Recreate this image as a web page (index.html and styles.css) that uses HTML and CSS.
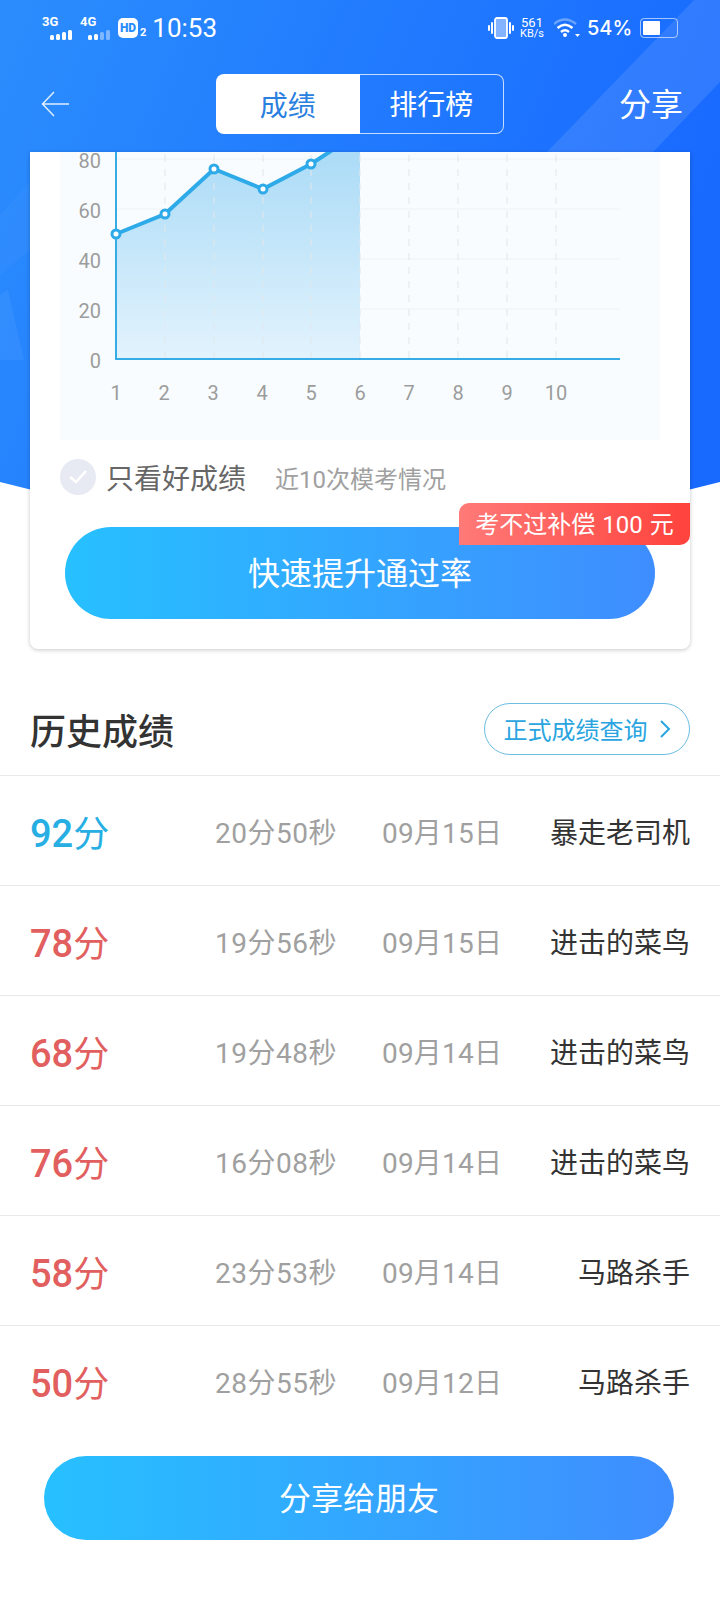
FILE: index.html
```html
<!DOCTYPE html>
<html>
    <head>
        <meta charset="UTF-8">
        <meta name="viewport" content="width=device-width, initial-scale=1.0">
        <title>成绩</title>
        <link rel="stylesheet" href="styles.css">
    </head>
    <body>
        <div class="page">
            <!-- blue backdrop with the curved lower edge -->
            <svg class="backdrop" width="720" height="540" viewBox="0 0 720 540">
                <defs>
                    <linearGradient id="backdropFill" x1="0" y1="0" x2="1" y2="0.3">
                        <stop offset="0" stop-color="#2b8dfd"/>
                        <stop offset="1" stop-color="#186aff"/>
                    </linearGradient>
                </defs>
                <path d="M0 0H720V482Q360 576 0 482Z" fill="url(#backdropFill)"/>
                <path d="M694 0H720V82L653 152H547Z" fill="#ffffff" opacity="0.1"/>
                <path d="M0 215L30 182V250L0 275Z" fill="#ffffff" opacity="0.03"/>
                <path d="M0 295L8 290L24 360H0Z" fill="#ffffff" opacity="0.05"/>
            </svg>

            <div class="status-bar">
                <div class="status-left">
                    <div class="signal">
                        <span class="signal-name">3G</span>
                        <svg width="24" height="10" viewBox="0 0 24 10">
                            <rect x="0" y="5" width="4" height="5" rx="1.5" fill="#fff"/>
                            <rect x="6" y="4" width="4" height="6" rx="1.5" fill="#fff"/>
                            <rect x="12" y="2" width="4" height="8" rx="1.5" fill="#fff"/>
                            <rect x="18" y="0" width="4" height="10" rx="1.5" fill="#fff"/>
                        </svg>
                    </div>
                    <div class="signal">
                        <span class="signal-name">4G</span>
                        <svg width="24" height="10" viewBox="0 0 24 10">
                            <rect x="0" y="5" width="4" height="5" rx="1.5" fill="#fff"/>
                            <rect x="6" y="4" width="4" height="6" rx="1.5" fill="#fff"/>
                            <rect x="12" y="2" width="4" height="8" rx="1.5" fill="#fff" opacity="0.4"/>
                            <rect x="18" y="0" width="4" height="10" rx="1.5" fill="#fff" opacity="0.4"/>
                        </svg>
                    </div>
                    <span class="hd">HD</span>
                    <span class="hd-sub">2</span>
                    <span class="clock">10:53</span>
                </div>
                <div class="status-right">
                    <svg width="26" height="24" viewBox="0 0 26 24">
                        <rect x="7" y="2" width="12" height="20" rx="2" fill="#ffffff" fill-opacity="0.45" stroke="#fff" stroke-width="1.8"/>
                        <path d="M4 7V17M1 10V14M22 7V17M25 10V14" stroke="#fff" stroke-width="2" stroke-linecap="round"/>
                    </svg>
                    <div class="speed">
                        <span class="speed-num">561</span>
                        <span class="speed-unit">KB/s</span>
                    </div>
                    <svg class="wifi" width="26" height="20" viewBox="0 0 26 20">
                        <path d="M0 6Q11 -3 22 6" fill="none" stroke="#fff" stroke-width="2.4" opacity="0.35"/>
                        <path d="M3.5 10Q11 3.5 18.500 10" fill="none" stroke="#fff" stroke-width="2.4"/>
                        <path d="M7 14Q11 10.500 15 14" fill="none" stroke="#fff" stroke-width="2.4"/>
                        <circle cx="11" cy="17" r="2" fill="#fff"/>
                        <path d="M21 16H26L23.500 19Z" fill="#fff"/>
                    </svg>
                    <span class="battery-num">54%</span>
                    <div class="battery">
                        <div class="battery-level"></div>
                    </div>
                </div>
            </div>

            <div class="header">
                <svg class="back" width="28" height="26" viewBox="0 0 28 26">
                    <path d="M28 13H2M13 1L1.500 13L13 25" fill="none" stroke="#fff" stroke-opacity="0.85" stroke-width="1.5"/>
                </svg>
                <div class="tabs">
                    <div class="tab tab-active">成绩</div>
                    <div class="tab">排行榜</div>
                </div>
                <div class="share">分享</div>
            </div>

            <div class="card">
                <svg class="chart" width="600" height="288" viewBox="60 152 600 288">
                    <defs>
                        <linearGradient id="areaFill" x1="0" y1="0" x2="0" y2="1">
                            <stop offset="0" stop-color="#a6d9f6"/>
                            <stop offset="1" stop-color="#e2f3fd"/>
                        </linearGradient>
                    </defs>
                    <rect x="60" y="152" width="600" height="288" fill="#f8fcff"/>
                    <path d="M116 159H620M116 209H620M116 259H620M116 309H620" stroke="#eef2f5" stroke-width="1"/>
                    <path d="M116 234L165 214L214 169L263 189L311 164L360 132V359H116Z" fill="url(#areaFill)"/>
                    <path d="M165 155V359M214 155V359M263 155V359M311 155V359M360 155V359M409 155V359M458 155V359M507 155V359M556 155V359" stroke="#e2e8ec" stroke-width="1.5" stroke-dasharray="7 7" opacity="0.7"/>
                    <path d="M116 152V359H620" fill="none" stroke="#35ace6" stroke-width="2"/>
                    <path d="M116 234L165 214L214 169L263 189L311 164L360 132" fill="none" stroke="#2eaae9" stroke-width="4"/>
                    <g fill="#fff" stroke="#2eaae9" stroke-width="3">
                        <circle cx="116" cy="234" r="4"/>
                        <circle cx="165" cy="214" r="4"/>
                        <circle cx="214" cy="169" r="4"/>
                        <circle cx="263" cy="189" r="4"/>
                        <circle cx="311" cy="164" r="4"/>
                    </g>
                    <g class="chart-y" text-anchor="end">
                        <text x="101" y="168">80</text>
                        <text x="101" y="218">60</text>
                        <text x="101" y="268">40</text>
                        <text x="101" y="318">20</text>
                        <text x="101" y="368">0</text>
                    </g>
                    <g class="chart-x" text-anchor="middle">
                        <text x="116" y="400">1</text>
                        <text x="164" y="400">2</text>
                        <text x="213" y="400">3</text>
                        <text x="262" y="400">4</text>
                        <text x="311" y="400">5</text>
                        <text x="360" y="400">6</text>
                        <text x="409" y="400">7</text>
                        <text x="458" y="400">8</text>
                        <text x="507" y="400">9</text>
                        <text x="556" y="400">10</text>
                    </g>
                </svg>

                <div class="filter">
                    <div class="check">
                        <svg width="20" height="16" viewBox="0 0 20 16">
                            <path d="M2 8L8 13L18 2" fill="none" stroke="#fff" stroke-width="2.6"/>
                        </svg>
                    </div>
                    <span class="filter-label">只看好成绩</span>
                    <span class="filter-note">近10次模考情况</span>
                </div>

                <div class="btn">快速提升通过率</div>
                <div class="badge">考不过补偿 100 元</div>
            </div>

            <div class="history-head">
                <div class="history-title">历史成绩</div>
                <div class="query">
                    正式成绩查询
                    <svg width="12" height="20" viewBox="0 0 12 20">
                        <path d="M2 2L10 10L2 18" fill="none" stroke="#2aa5e0" stroke-width="2"/>
                    </svg>
                </div>
            </div>

            <div class="rows">
                <div class="row">
                    <div class="score score-good"><b>92</b>分</div>
                    <div class="muted">20分50秒</div>
                    <div class="muted date">09月15日</div>
                    <div class="name">暴走老司机</div>
                </div>
                <div class="row">
                    <div class="score"><b>78</b>分</div>
                    <div class="muted">19分56秒</div>
                    <div class="muted date">09月15日</div>
                    <div class="name">进击的菜鸟</div>
                </div>
                <div class="row">
                    <div class="score"><b>68</b>分</div>
                    <div class="muted">19分48秒</div>
                    <div class="muted date">09月14日</div>
                    <div class="name">进击的菜鸟</div>
                </div>
                <div class="row">
                    <div class="score"><b>76</b>分</div>
                    <div class="muted">16分08秒</div>
                    <div class="muted date">09月14日</div>
                    <div class="name">进击的菜鸟</div>
                </div>
                <div class="row">
                    <div class="score"><b>58</b>分</div>
                    <div class="muted">23分53秒</div>
                    <div class="muted date">09月14日</div>
                    <div class="name">马路杀手</div>
                </div>
                <div class="row">
                    <div class="score"><b>50</b>分</div>
                    <div class="muted">28分55秒</div>
                    <div class="muted date">09月12日</div>
                    <div class="name">马路杀手</div>
                </div>
            </div>

            <div class="btn btn-share">分享给朋友</div>
        </div>
    </body>
</html>
```

FILE: styles.css
```css
*{
    box-sizing: border-box;
    font-family: Roboto, "Noto Sans CJK SC", sans-serif;
}

body{
    margin: 0;
    background-color: white;
}

.page{
    position: relative;
    width: 720px;
    height: 1600px;
    overflow: hidden;
}

.backdrop{
    position: absolute;
    top: 0;
    left: 0;
}

.status-bar{
    position: relative;
    height: 56px;
    padding: 0 42px;
    display: flex;
    justify-content: space-between;
    align-items: center;
    color: white;
}

.status-left, .status-right{
    display: flex;
    align-items: center;
}

.signal{
    position: relative;
    width: 38px;
    height: 24px;
    padding: 14px 0 0 8px;
}

.signal svg{
    display: block;
}

.signal-name{
    position: absolute;
    top: -1px;
    left: 0;
    font-size: 13px;
    font-weight: 700;
    line-height: 14px;
}

.hd{
    width: 20px;
    height: 20px;
    border-radius: 5px;
    background-color: white;
    color: #2b8dfd;
    font-size: 12px;
    font-weight: 900;
    line-height: 20px;
    text-align: center;
}

.hd-sub{
    margin: 8px 6px 0 2px;
    font-size: 11px;
    font-weight: 700;
}

.clock{
    font-size: 26px;
}

.speed{
    width: 24px;
    margin-left: 6px;
    display: flex;
    flex-direction: column;
    align-items: center;
    line-height: 11px;
}

.speed-num{
    font-size: 13px;
}

.speed-unit{
    font-size: 11px;
    white-space: nowrap;
}

.wifi{
    margin-left: 10px;
}

.battery-num{
    width: 44px;
    margin-left: 7px;
    font-family: Inter, sans-serif;
    font-size: 20px;
    font-weight: 500;
    white-space: nowrap;
}

.battery{
    width: 38px;
    height: 20px;
    margin-left: 9px;
    padding: 2px;
    border: 1.5px solid rgba(255, 255, 255, 0.6);
    border-radius: 4px;
}

.battery-level{
    width: 54%;
    height: 100%;
    background-color: white;
    border-radius: 1px;
}

.header{
    position: relative;
    height: 96px;
    padding: 0 37px 0 41px;
    display: grid;
    grid-template-columns: 175px 288px 1fr;
    align-items: center;
}

.back{
    display: block;
}

.tabs{
    display: flex;
    height: 60px;
}

.tab{
    flex: 1;
    font-size: 28px;
    line-height: 62px;
    text-align: center;
    color: white;
    border: 1.5px solid rgba(255, 255, 255, 0.75);
    border-left: none;
    border-radius: 0 8px 8px 0;
}

.tab-active{
    line-height: 65px;
    background-color: white;
    color: #2a80df;
    border: none;
    border-radius: 8px 0 0 8px;
}

.share{
    margin-bottom: 4px;
    font-size: 32px;
    text-align: right;
    color: white;
}

.card{
    position: relative;
    margin: 0 30px;
    padding: 0 0 30px;
    background-color: white;
    border-radius: 0 0 8px 8px;
    box-shadow: 0 1px 4px rgba(0, 0, 0, 0.22);
}

.chart{
    display: block;
    margin-left: 30px;
}

.chart text{
    font-size: 20px;
    fill: #9c9c9c;
}

.filter{
    height: 36px;
    margin: 19px 0 0 30px;
    display: flex;
    align-items: center;
}

.check{
    width: 36px;
    height: 36px;
    border-radius: 50%;
    background-color: #e8eaf3;
    display: flex;
    align-items: center;
    justify-content: center;
}

.filter-label{
    margin-left: 10px;
    font-size: 28px;
    color: #666;
}

.filter-note{
    margin-left: 29px;
    font-size: 24px;
    color: #a0a0a0;
}

.btn{
    height: 92px;
    margin: 32px 35px 0;
    border-radius: 46px;
    background: linear-gradient(90deg, #27c0ff, #3f8dff);
    font-size: 32px;
    line-height: 94px;
    text-align: center;
    color: white;
}

.badge{
    position: absolute;
    top: 351px;
    right: 0;
    width: 231px;
    height: 42px;
    border-radius: 10px 0 10px 0;
    background: linear-gradient(90deg, #ff7a78, #ff423c);
    font-size: 24px;
    line-height: 44px;
    text-align: center;
    word-spacing: 1px;
    white-space: pre;
    color: white;
}

.history-head{
    height: 52px;
    margin: 54px 30px 20px;
    display: flex;
    justify-content: space-between;
    align-items: center;
}

.history-title{
    font-size: 36px;
    font-weight: 500;
    color: #333;
}

.query{
    width: 206px;
    height: 52px;
    padding-bottom: 1px;
    border: 1px solid #6bbde2;
    border-radius: 26px;
    display: flex;
    justify-content: center;
    align-items: center;
    gap: 11px;
    font-size: 24px;
    color: #2aa5e0;
}

.row{
    height: 110px;
    padding: 0 30px;
    border-top: 1px solid #e8e8e8;
    display: grid;
    grid-template-columns: 185px 167px 1fr auto;
    align-items: center;
    font-size: 28px;
}

.score{
    font-size: 36px;
    color: #e25f5f;
}

.score b{
    font-size: 38px;
    font-weight: 500;
}

.score-good{
    color: #27aee3;
}

.muted{
    letter-spacing: 0.5px;
    color: #a0a0a0;
}

.date{
    letter-spacing: 0.2px;
}

.name{
    color: #333;
}

.btn-share{
    height: 84px;
    margin: 21px 46px 0 44px;
    border-radius: 42px;
    line-height: 86px;
}
```
